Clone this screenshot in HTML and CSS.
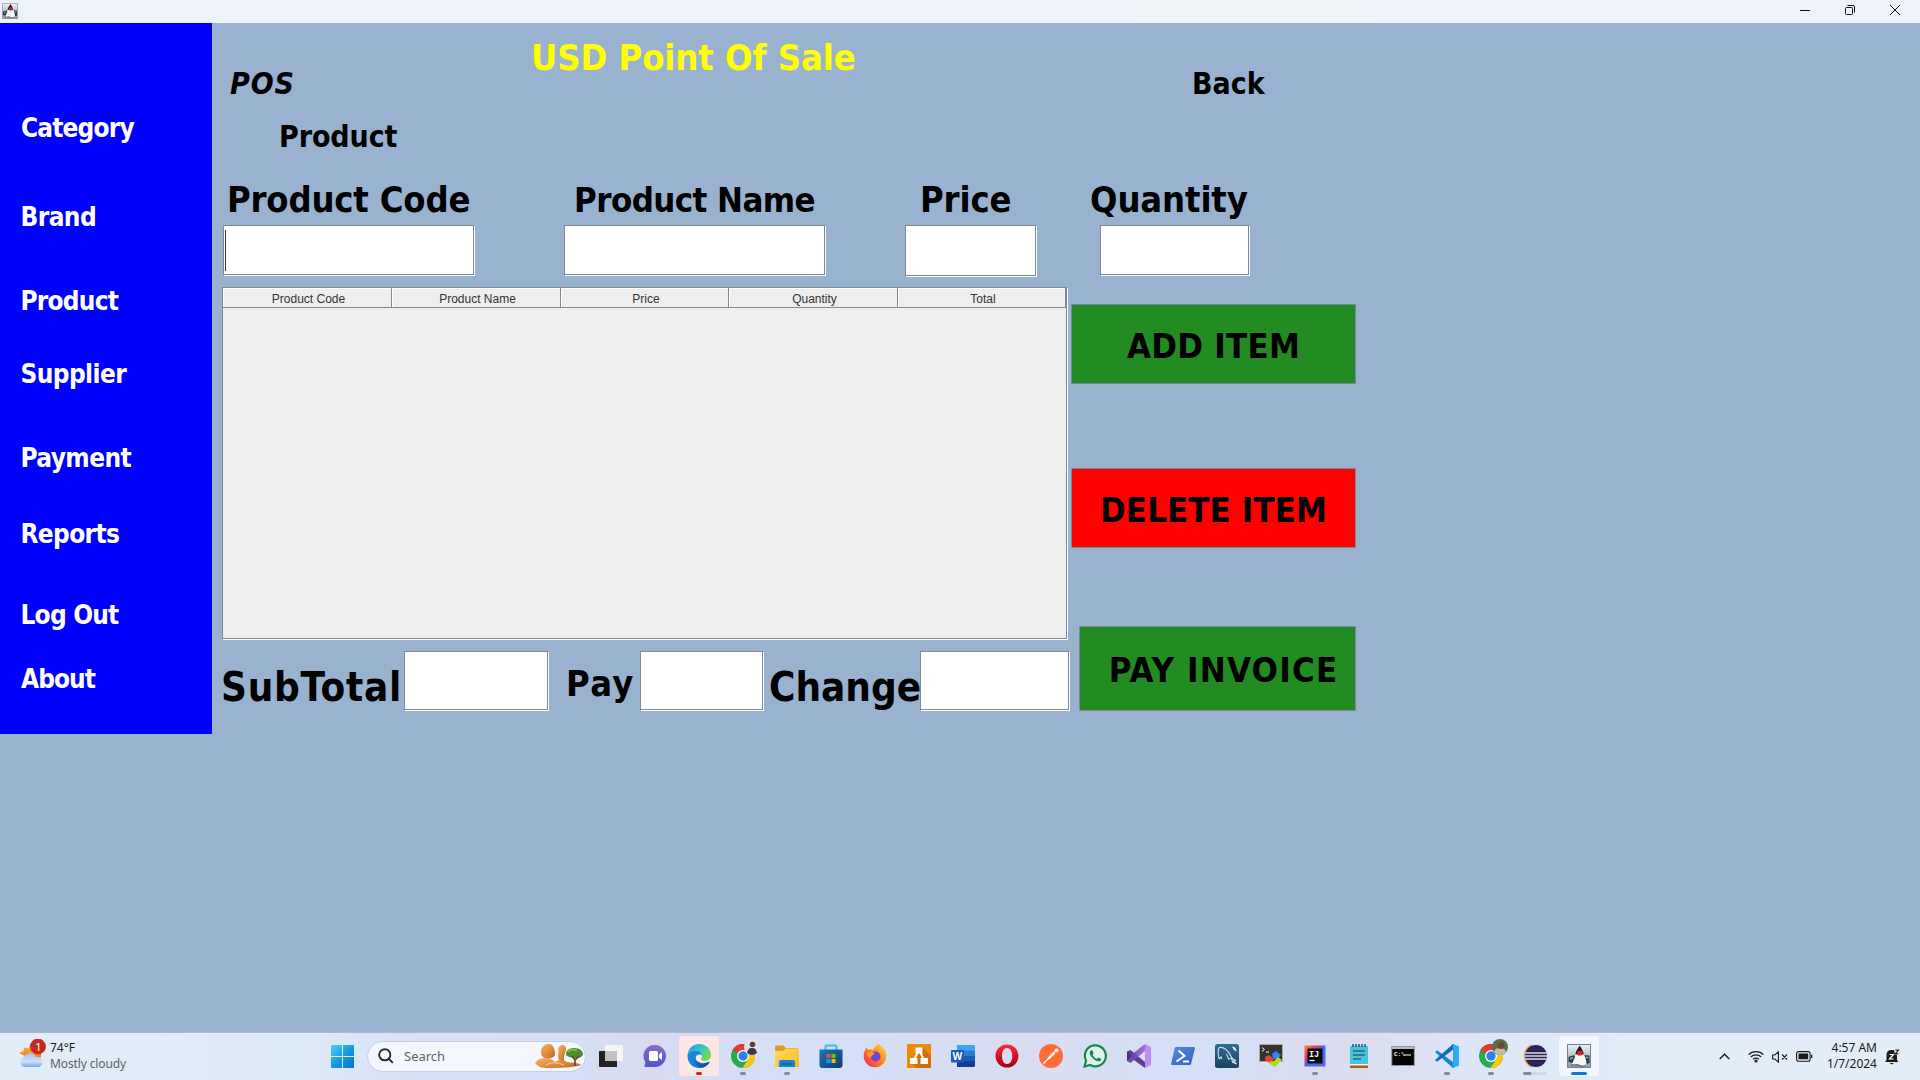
FILE: index.html
```html
<!DOCTYPE html>
<html lang="en">
<head>
<meta charset="utf-8">
<title>USD Point Of Sale</title>
<link rel="stylesheet" href="styles.css">
</head>
<body>
<svg class="defs" width="0" height="0">
  <defs>
    <linearGradient id="win" x1="0" y1="0" x2="1" y2="1"><stop offset="0" stop-color="#4fd3fb"/><stop offset=".5" stop-color="#159ae3"/><stop offset="1" stop-color="#0470cf"/></linearGradient>
    <linearGradient id="sun" x1="0" y1="0" x2="0" y2="1"><stop offset="0" stop-color="#fbc02d"/><stop offset="1" stop-color="#ee7b20"/></linearGradient>
    <linearGradient id="cloud" x1="0" y1="0" x2="0" y2="1"><stop offset="0" stop-color="#9dbff5"/><stop offset=".6" stop-color="#cfe0fb"/><stop offset="1" stop-color="#7ea5ea"/></linearGradient>
    <linearGradient id="rock" x1="0" y1="0" x2="1" y2="1"><stop offset="0" stop-color="#f7b765"/><stop offset="1" stop-color="#c4651c"/></linearGradient>
    <linearGradient id="chat" x1="0" y1="0" x2="0" y2="1"><stop offset="0" stop-color="#8a6ac6"/><stop offset="1" stop-color="#4f58d0"/></linearGradient>
    <linearGradient id="edgeTop" x1="0" y1="0" x2="1" y2=".5"><stop offset="0" stop-color="#1c9fe0"/><stop offset=".5" stop-color="#2cc0d4"/><stop offset="1" stop-color="#6ede4c"/></linearGradient>
    <linearGradient id="edgeLow" x1="0" y1="0" x2="1" y2="1"><stop offset="0" stop-color="#1a8bdc"/><stop offset="1" stop-color="#0b3f8a"/></linearGradient>
    <linearGradient id="folder" x1="0" y1="0" x2="1" y2="1"><stop offset="0" stop-color="#ffdc6a"/><stop offset="1" stop-color="#f8b71c"/></linearGradient>
    <linearGradient id="store" x1="0" y1="0" x2="1" y2="1"><stop offset="0" stop-color="#1878bd"/><stop offset="1" stop-color="#123a70"/></linearGradient>
    <linearGradient id="fox" x1="1" y1="0" x2="0" y2="1"><stop offset="0" stop-color="#ffe03a"/><stop offset=".45" stop-color="#ff8a1d"/><stop offset="1" stop-color="#f0195c"/></linearGradient>
    <linearGradient id="opera" x1="0" y1="0" x2="0" y2="1"><stop offset="0" stop-color="#ff2a3a"/><stop offset="1" stop-color="#a3000f"/></linearGradient>
    <linearGradient id="shell" x1="0" y1="0" x2="1" y2="1"><stop offset="0" stop-color="#5a8ae0"/><stop offset="1" stop-color="#2c5fbd"/></linearGradient>
    <linearGradient id="vs" x1="0" y1="0" x2="1" y2="0"><stop offset="0" stop-color="#5a3794"/><stop offset="1" stop-color="#9a63d8"/></linearGradient>
    <linearGradient id="sql" x1="0" y1="0" x2="0" y2="1"><stop offset="0" stop-color="#2f6d93"/><stop offset="1" stop-color="#1b4361"/></linearGradient>
    <linearGradient id="idea" x1="0" y1="0" x2="1" y2="1"><stop offset="0" stop-color="#fd8a1c"/><stop offset=".3" stop-color="#e8336c"/><stop offset=".55" stop-color="#2f6ff0"/><stop offset="1" stop-color="#6b5cf0"/></linearGradient>
    <linearGradient id="duke" x1="0" y1="0" x2="0" y2="1"><stop offset="0" stop-color="#eef2f5"/><stop offset="1" stop-color="#8199ad"/></linearGradient>
    <symbol id="java" viewBox="0 0 24 24">
      <path d="M.5.5h23v23H.5z" fill="url(#duke)" stroke="#6d8296"/>
      <path d="M1.500 13l5.500-2 2 4-3 4-4.500-1zM22.500 11.500l-5-.5-1 5 3 4 3-1z" fill="#34393e"/>
      <path d="M3 15l3-1.500M18.500 13.500l3 0" stroke="#6eb4e0" stroke-width="1.500"/>
      <path d="M12.500 4C10 7 8.500 10 8 13l-3 7c2 3 5 0 7 1s4 2.500 6.500.5c2-2 .5-6-1-9.500C16.500 9 15 7 12.500 4z" fill="#f6f6f6"/>
      <path d="M12.800 1.500C11 4.500 9 6.500 8.300 10.500l3.700-.5 4.800.5C16.500 7.500 14.500 4.500 12.800 1.500z" fill="#15181b"/>
      <ellipse cx="12.800" cy="9" rx="2.900" ry="2.600" fill="#e31d25"/>
      <path d="M4.500 20.500c2 1.500 5-.5 7 .5s4.500 2 7 0" fill="none" stroke="#3a4045" stroke-width="1"/>
    </symbol>
    <symbol id="chrome" viewBox="0 0 24 24">
      <circle cx="12" cy="12" r="12" fill="#2da94f"/>
      <path d="M12 12L1.600 6A12 12 0 0 1 22.400 6z" fill="#e33b2e"/>
      <path d="M12 6h10.400A12 12 0 0 1 11.500 24L17.200 15z" fill="#fdc60a"/>
      <path d="M1.600 6L6.800 15 12 17.400 12 6z" fill="#2da94f"/>
      <path d="M1.600 6A12 12 0 0 1 22.400 6H12A6 6 0 0 0 6.800 9z" fill="#e33b2e"/>
      <circle cx="12" cy="12" r="6" fill="#fff"/><circle cx="12" cy="12" r="4.700" fill="#3180f0"/>
    </symbol>
  </defs>
</svg>

<header class="titlebar">
  <svg class="app-icon" width="16" height="16"><use href="#java"/></svg>
  <div class="controls">
    <svg width="10" height="10" viewBox="0 0 10 10"><path d="M0 5.500h10" stroke="#111"/></svg>
    <svg width="10" height="10" viewBox="0 0 10 10" fill="none" stroke="#111"><rect x=".5" y="2.500" width="7" height="7" rx="1"/><path d="M2.500.5H8A1.500 1.500 0 0 1 9.500 2v5.500"/></svg>
    <svg width="10" height="10" viewBox="0 0 10 10"><path d="M0 0l10 10M10 0L0 10" stroke="#111"/></svg>
  </div>
</header>

<div class="window">
  <nav class="sidebar">
    <a class="nav n-category">Category</a>
    <a class="nav">Brand</a>
    <a class="nav n-product">Product</a>
    <a class="nav">Supplier</a>
    <a class="nav">Payment</a>
    <a class="nav n-reports">Reports</a>
    <a class="nav n-product">Log Out</a>
    <a class="nav n-about">About</a>
  </nav>

  <main class="main">
    <div class="top">
      <div class="label pos">POS</div>
      <h1 class="title">USD Point Of Sale</h1>
      <div class="label">Back</div>
    </div>
    <h2 class="label section">Product</h2>

    <div class="fields">
      <div class="group"><div class="cap cap-code">Product Code</div><div class="field f-code"><span class="caret"></span></div></div>
      <div class="group"><div class="cap cap-name">Product Name</div><div class="field f-name"></div></div>
      <div class="group"><div class="cap cap-price">Price</div><div class="field f-price"></div></div>
      <div class="group"><div class="cap">Quantity</div><div class="field f-qty"></div></div>
    </div>

    <div class="work">
      <div class="sheet">
        <div class="table">
          <div class="thead">
            <div class="th">Product Code</div><div class="th">Product Name</div><div class="th">Price</div><div class="th">Quantity</div><div class="th">Total</div>
          </div>
        </div>
        <div class="totals">
          <div class="sum s-sub">SubTotal</div><div class="field t-sub"></div>
          <div class="sum s-pay">Pay</div><div class="field t-pay"></div>
          <div class="sum s-change">Change</div><div class="field t-change"></div>
        </div>
      </div>
      <div class="actions">
        <div class="btn add">ADD ITEM</div>
        <div class="btn delete">DELETE ITEM</div>
        <div class="btn pay">PAY INVOICE</div>
      </div>
    </div>
  </main>
</div>

<footer class="taskbar">
  <div class="weather">
    <svg width="30" height="30" viewBox="0 0 30 30">
      <path d="M11 4.500l3 2 8 4v8H9L6 17l-6-3 4.500-2 .5-3.500 5 1z" fill="url(#sun)"/>
      <path d="M5 28a5 5 0 0 1 0-9.500c.8-3 3-4.500 6-4.500s5 1.800 5.800 4.300c4-.8 6.700 1.400 6.700 4.700 0 3-2 5-4.500 5z" fill="url(#cloud)"/>
      <circle cx="19" cy="7.500" r="7.900" fill="#c62a1c"/>
      <text x="19.500" y="11.700" text-anchor="middle" class="badge">1</text>
    </svg>
    <div class="weather-text"><div>74°F</div><div class="muted">Mostly cloudy</div></div>
  </div>
  <svg class="start" width="23" height="23" viewBox="0 0 23 23"><path d="M1 0h10v11H0V1q0-1 1-1zM12 0h10q1 0 1 1v10H12zM0 12h11v11H1q-1 0-1-1zM12 12h11v10q0 1-1 1H12z" fill="url(#win)"/></svg>
  <div class="search">
    <svg width="16" height="16" viewBox="0 0 16 16" fill="none" stroke="#25282c" stroke-width="1.900"><circle cx="6.800" cy="6.800" r="5.600"/><path d="M10.800 10.800l4 4"/></svg>
    <span>Search</span>
    <svg class="scene" width="48" height="26" viewBox="0 0 48 26">
      <path d="M0 20c3-4 6-5 11-5 4 0 7 2 9 4 5-3 9-2 12 0 5 1 10 0 14 3-6 3-38 4-41 2-2-1-4-3-5-4z" fill="url(#rock)"/>
      <path d="M6 9c0-5 3-8 8-8 4 0 6 5 6 10 0 3-4 5-8 4-4 0-6-2-6-6z" fill="url(#rock)"/>
      <path d="M23 5c2-4 8-4 8 1l-2 8v4l-5-1c-2-3 0-7-1-12z" fill="url(#rock)"/>
      <path d="M11 22c6-3 9-3 18 0" stroke="#f9cf8b" fill="none"/>
      <path d="M31 11c0-4 4-6 8-6s9 2 9 6c0 3-5 5-9 4s-8-1-8-4z" fill="#4d8f2c"/><path d="M33 9c2-3 6-3 9-1" stroke="#83bd45" stroke-width="2" fill="none"/>
      <path d="M37 13l3 4 4-4M40 16v7" stroke="#6a3a1d" stroke-width="1.500" fill="none"/>
    </svg>
  </div>
  <div class="apps">
    <div class="app"><svg viewBox="0 0 24 24"><path d="M0 7h18v16H1q-1 0-1-1z" fill="#222"/><path d="M6 1h17q1 0 1 1v14q0 1-1 1H6z" fill="#f5f5f6"/><path d="M6 7h12v10H6z" fill="#c1c2c4"/></svg></div>
    <div class="app"><svg viewBox="0 0 24 24"><path d="M12 1a11 11 0 1 1 0 22H1.500c0-2 .8-3 .8-5A11 11 0 0 1 12 1z" fill="url(#chat)"/><rect x="6" y="7" width="9" height="10" rx="1.500" fill="#fff"/><path d="M16 10.500l3-2.500v8l-3-2.500z" fill="#fff"/></svg></div>
    <div class="app alert"><svg viewBox="0 0 24 24"><path d="M.5 11C1 4.500 6 0 12.200 0 19 0 24 5 24 11c0 3.500-2.500 6-6 6-2 0-4-.6-4-2s1.300-1.500 1-3.500C14.700 8.500 12 6.500 8.500 6.500 5 6.500 2 8 .5 11z" fill="url(#edgeTop)"/><path d="M.5 11C2 8 5 6.500 8.500 6.500c3.500 0 6.200 2 6.500 5-1.500-1.700-6-1.500-6.500 2.500-.6 4.500 4 8 13.500 5A12 12 0 0 1 12 24C5 24 0 18.500.5 11z" fill="#1786d6"/><path d="M8.500 12c-3.500 4-1 10 5.500 11.800 4-.5 7-2.800 8.700-5.600.3-.7-.2-.7-.8-.4C14 21.500 7.500 17 8.500 12z" fill="url(#edgeLow)"/></svg><i class="mark red"></i></div>
    <div class="app"><svg viewBox="0 0 24 24"><use href="#chrome"/></svg><svg class="face" viewBox="0 0 16 16"><circle cx="8" cy="8" r="8" fill="#dfe1e6"/><path d="M3 14c1-4 2-5 5-5s4 1 5 5a8 8 0 0 1-10 0z" fill="#343c55"/><circle cx="8.500" cy="5.500" r="2.800" fill="#5b3a31"/></svg><i class="mark"></i></div>
    <div class="app"><svg viewBox="0 0 24 24"><path d="M0 3q0-1.500 1.500-1.500h7L11 4H23v5H0z" fill="#d9a01c"/><path d="M0 7h8l3-2.500h12q1 0 1 1V22q0 1-1 1H1q-1 0-1-1z" fill="url(#folder)"/><path d="M4 23v-5q0-2 2-2h12q2 0 2 2v5z" fill="#1683cf"/><path d="M7 20h10" stroke="#0b5d9d" stroke-width="1.500"/></svg><i class="mark"></i></div>
    <div class="app"><svg viewBox="0 0 24 24"><path d="M6.500 6V2.500q0-1 1-1h9q1 0 1 1V6" fill="none" stroke="#37bdf0" stroke-width="2"/><path d="M.5 5.500h23V21q0 3-3 3h-17q-3 0-3-3z" fill="url(#store)"/><path d="M7.500 10h4v4h-4z" fill="#f25022"/><path d="M12.500 10h4v4h-4z" fill="#7fba00"/><path d="M7.500 15h4v4h-4z" fill="#00a4ef"/><path d="M12.500 15h4v4h-4z" fill="#ffb900"/></svg></div>
    <div class="app"><svg viewBox="0 0 24 24"><path d="M15 0c4 2 5 4 5 5l1-1c1.500 3 2.300 5 2.300 8A11.300 11.300 0 0 1 .7 12C.7 8 2 6 3.500 3.500L5 6c2-1 3-1 5 0 1-3 3-4 5-6z" fill="url(#fox)"/><circle cx="12.500" cy="12.500" r="5" fill="#7143d8"/><path d="M4 9c3-2 7-1 8 1-3 1-4 2-4 4-3 0-4-3-4-5z" fill="#ff9a26"/></svg></div>
    <div class="app"><svg viewBox="0 0 24 24"><path d="M0 0h24v24H0z" fill="#f08705"/><path d="M15 3l9 9v12H9l-4-5z" fill="#d56e04"/><path d="M12 6L6.500 17M12 6l5.500 11" stroke="#fff" stroke-width="2"/><path d="M8.500 3.500h7v6h-7zM3 14h7.500v6H3zM13.500 14H21v6h-7.500z" fill="#fff"/></svg></div>
    <div class="app"><svg viewBox="0 0 24 24"><path d="M6 1h17q1 0 1 1v5H6z" fill="#41a5ee"/><path d="M6 6.500h18V12H6z" fill="#2b7cd3"/><path d="M6 12h18v5.500H6z" fill="#185abd"/><path d="M6 17h18v5q0 1-1 1H6z" fill="#103f91"/><rect y="6" width="13" height="12.500" rx="1" fill="#1b5bc0"/><text x="6.400" y="16" text-anchor="middle" class="glyph w">W</text></svg></div>
    <div class="app"><svg viewBox="0 0 24 24"><path fill-rule="evenodd" d="M12 .5a11.500 11.500 0 1 1 0 23 11.500 11.500 0 0 1 0-23zm0 3.500c-3.300 0-5 3.500-5 8s1.700 8 5 8 5.300-3.500 5.300-8S15.300 4 12 4z" fill="url(#opera)"/></svg></div>
    <div class="app"><svg viewBox="0 0 24 24"><circle cx="12" cy="12" r="12" fill="#ff6c37"/><path d="M4.500 19.500l4-4M8 16l8-8" stroke="#fff" stroke-width="1.300"/><path d="M8.500 14l5.500-6 2 2-6 5.500z" fill="#fff"/><circle cx="17.500" cy="6.500" r="2" fill="#fff"/></svg></div>
    <div class="app"><svg viewBox="0 0 24 24"><path d="M1.500 22.500l1.600-5.800A10.500 10.500 0 1 1 7.300 21z" fill="#e3f1ee" stroke="#15884f" stroke-width="2.200"/><path d="M8.200 6.300c-2.600 1.500-1.500 5 1.500 8s6.700 4.300 8.300 1.600c.4-.9 0-1.300-2.800-2.400l-1.400 1.400c-1.800-.6-3.600-2.300-4.300-4.100l1.100-1.400c-.8-2.400-1.200-3.300-2.400-3.100z" fill="#15884f"/></svg></div>
    <div class="app"><svg viewBox="0 0 24 24"><path d="M0 7.500L3.500 6 18 18v6L4 14l-4 3z" fill="#5d3d99"/><path d="M0 17l3.500 2L18 7V0L4 11 0 7.500z" fill="url(#vs)" opacity=".9"/><path d="M0 7.500v9.500l4-4.700z" fill="#48307a"/><path d="M18 0l6 3v18l-6 3z" fill="#c08cf4"/></svg></div>
    <div class="app"><svg viewBox="0 0 24 24"><path d="M5 3h18q1 0 1 1l-4 16q-.5 1-1.500 1H1q-1 0-1-1L3.700 4q.3-1 1.300-1z" fill="url(#shell)"/><path d="M7.500 6.500l6 5.500-8 5.500M12 17.500h6" stroke="#fff" stroke-width="2" fill="none"/></svg></div>
    <div class="app"><svg viewBox="0 0 24 24"><rect width="24" height="24" rx="2.500" fill="url(#sql)"/><path d="M4 15C3 10 2.500 5 4.500 3.500c4-1 9 3.500 11 8 1 3 3 4 5 5l-2 .5 3 3-4-2-1-4-3 1-2-5M4 15l2-2 1 2" stroke="#cfe2ee" stroke-width="1.100" fill="none"/><path d="M17 2.500l3 1 2 4-3-1.500z" fill="#fff"/></svg></div>
    <div class="app"><svg viewBox="0 0 24 24"><path d="M.5.500h23v17H.5z" fill="#333" stroke="#b5a995"/><path d="M3 3.500l2.500 2L3 7.500M7 8h3" stroke="#fff" fill="none"/><path d="M6 13l4-2 5 4-3 5-6-4z" fill="#e8423a"/><path d="M13 10l4-3 5 4-4 5-4-2z" fill="#3f7df5"/><path d="M9 19l3-2 2 1 5-5 4 3-7 7z" fill="#b1dc1d"/></svg></div>
    <div class="app"><svg viewBox="0 0 24 24"><path d="M1.500 1.500h21v21h-21z" fill="url(#idea)"/><path d="M4.500 4.500h15v15h-15z" fill="#0d0710"/><path d="M6.500 16.500h5" stroke="#fff" stroke-width="1.300"/><text x="6" y="12.700" class="glyph ij">IJ</text></svg><i class="mark"></i></div>
    <div class="app"><svg viewBox="0 0 24 24"><path d="M3 2h18v20H3z" fill="#4cc3dc"/><path d="M3 21h18v3H3z" fill="#b4581b"/><path d="M3 20h18v1.500H3z" fill="#f3f3f3"/><path d="M6 0v3M9 0v3M12 0v3M15 0v3M18 0v3" stroke="#1f5569" stroke-width="1.500"/><path d="M6 7h12M6 11h12M6 15h8" stroke="#166b8d" stroke-width="1.500"/></svg></div>
    <div class="app"><svg viewBox="0 0 24 24"><path d="M.8 2.500h22.500v19H.8z" fill="#050505" stroke="#93979b"/><path d="M1 3h22v2H1z" fill="#b8bcc1"/><text x="3" y="11.500" class="glyph cmd">C:\</text><path d="M13 11h7" stroke="#fff"/></svg></div>
    <div class="app"><svg viewBox="0 0 24 24"><path d="M0 8l2-1.700 17 12.500V24h-1z" fill="#1487d4"/><path d="M0 16l2 1.700L19 5V0h-1z" fill="#0b6fbd"/><path d="M18 0l6 2.500v19L18 24z" fill="#2ea9f2"/></svg><i class="mark"></i></div>
    <div class="app"><svg viewBox="0 0 24 24"><use href="#chrome"/></svg><svg class="face" viewBox="0 0 16 16"><circle cx="8" cy="8" r="8" fill="#5c6f47"/><path d="M2 13.300c1-4 3-4 6-4s5 0 6 4a8 8 0 0 1-12 0z" fill="#bdbab0"/><circle cx="9" cy="6.500" r="3.500" fill="#6b4a38"/></svg><i class="mark"></i></div>
    <div class="app"><svg viewBox="0 0 24 24"><path d="M9 1.300A11.500 11.500 0 0 0 9 22.700 11.500 11.500 0 0 1 9 1.300z" fill="#f7941e" stroke="#f7941e" stroke-width="1.500"/><circle cx="13" cy="12" r="11" fill="#2c2255"/><path d="M2 9h22M2 12h22M2 15h22" stroke="#d9d8ea" stroke-width="1.500"/></svg><i class="mark wide"></i></div>
    <div class="app current"><svg viewBox="0 0 24 24"><use href="#java"/></svg><i class="mark blue"></i></div>
  </div>
  <div class="tray">
    <svg width="11" height="7" viewBox="0 0 11 7"><path d="M.7 6l4.800-4.800L10.300 6" fill="none" stroke="#1b1b1b" stroke-width="1.400"/></svg>
    <svg class="wifi" width="16" height="13" viewBox="0 0 16 13" fill="none" stroke="#1b1b1b" stroke-width="1.200"><path d="M.6 4.600a10.500 10.500 0 0 1 14.800 0M2.800 7a7.300 7.300 0 0 1 10.400 0M5 9.300a4.200 4.200 0 0 1 6 0"/><circle cx="8" cy="11" r="1" fill="#1b1b1b"/></svg>
    <svg class="speaker" width="16" height="12" viewBox="0 0 16 12" fill="none" stroke="#1b1b1b" stroke-width="1.100"><path d="M.6 4h2.200L6.400.8v10.400L2.800 8H.6zM10 3.500l5 5M15 3.500l-5 5"/></svg>
    <svg class="battery" width="17" height="11" viewBox="0 0 17 11"><rect x=".6" y=".6" width="13.500" height="9.600" rx="2" fill="none" stroke="#1b1b1b" stroke-width="1.100"/><path d="M2.500 2.500h9.700v5.800H2.500zM15 3.800h1.300v3.200H15z" fill="#1b1b1b"/></svg>
    <div class="clock"><div class="time">4:57 AM</div><div>1/7/2024</div></div>
    <svg class="bell" width="15" height="16" viewBox="0 0 15 16"><path d="M1.500 11V6q0-5 5-5h5.500v10l1.500 2H0z" fill="#1b1b1b"/><path d="M4.500 14h4.500l-2.200 1.500z" fill="#1b1b1b"/><path d="M4.500 5.500h4l-4 4.500h4" fill="none" stroke="#fff" stroke-width="1.200"/><path d="M8.800 0h5.700v5.500H10z" fill="#e2edf8"/><path d="M10.300 1h3.200l-3.200 3.700h3.200" fill="none" stroke="#1b1b1b" stroke-width="1.100"/></svg>
  </div>
</footer>
</body>
</html>
```
FILE: styles.css
```css
* { box-sizing: border-box; }
body {
  margin: 0;
  width: 1920px;
  height: 1080px;
  overflow: hidden;
  display: flex;
  flex-direction: column;
  background: #99b2d0;
  color: #000;
  font-family: "DejaVu Sans Condensed", "DejaVu Sans", sans-serif;
}
svg { display: block; flex: none; }
.defs { position: absolute; }

/* title bar */
.titlebar {
  height: 23px;
  flex: none;
  display: flex;
  justify-content: space-between;
  padding: 3px 20px 0 2px;
  background: linear-gradient(90deg, #eef3fb 1100px, #eff4f7 1180px, #eff4f7 1340px, #eef3fb 1400px);
}
.controls { display: flex; gap: 35px; padding-top: 2px; }

/* window */
.window { flex: 1; display: flex; align-items: flex-start; min-height: 0; }
.sidebar {
  width: 212px;
  height: 711px;
  flex: none;
  padding: 90px 0 0 20px;
  background: #00f;
  display: grid;
  grid-template-rows: 89px 84px 73px 84px 76px 81px 64px 30px;
}
.nav { color: #fff; font-weight: bold; font-size: 26px; line-height: 30px; letter-spacing: -.6px; padding-left: .5px; }
.n-category { letter-spacing: -.85px; padding-left: 1px; }
.n-product { letter-spacing: -.8px; }
.n-reports { letter-spacing: -.65px; }
.n-about { letter-spacing: -.95px; padding-left: 1px; }

.main { flex: 1; }
.top { height: 94px; display: grid; grid-template-columns: 301px 661px 200px; padding: 41px 0 0 18px; }
.label { margin: 0; font-size: 30px; font-weight: bold; line-height: 40px; }
.pos { font-style: italic; letter-spacing: .9px; }
.title { margin: -28px 0 0; font-size: 36px; line-height: 44px; color: #ff0; letter-spacing: -.07px; }
.section { padding-left: 67px; letter-spacing: -.1px; }

.fields { display: grid; grid-template-columns: 341px 341px 185px 160px; padding: 21px 0 0 11px; height: 130px; }
.cap { font-size: 36px; font-weight: bold; line-height: 44px; margin-bottom: 3px; letter-spacing: -.12px; }
.cap-code { padding-left: 4px; letter-spacing: -.18px; }
.cap-name { padding-left: 10px; font-size: 34.5px; letter-spacing: -.58px; }
.cap-price { padding-left: 15px; }
.field { background: #fff; border: 1px solid #7a8a99; box-shadow: 1px 1px 0 #fff; }
.f-code { width: 251px; height: 50px; padding: 4px 0 0 1px; }
.caret { display: block; width: 1px; height: 41px; background: #333; }
.f-name { width: 261px; height: 50px; }
.f-price { width: 131px; height: 51px; }
.f-qty { width: 149px; height: 50px; margin-left: 10px; }

.work { display: flex; padding-left: 8px; }
.sheet { width: 851px; }
.table { margin-left: 2px; width: 845px; height: 352px; background: #eee; border: 1px solid #7a8a99; box-shadow: 1px 1px 0 #fff; }
.thead { display: grid; grid-template-columns: 169px 169px 168px 169px 168px; height: 20px; }
.th {
  font: 12px/16px "Liberation Sans", Arial, sans-serif;
  height: 20px;
  text-align: center;
  color: #333;
  padding: 3px 0 0 3px;
  border: solid #7a8a99;
  border-width: 0 1px 1px 0;
  box-shadow: inset 1px 1px 0 #fff;
}
.totals { display: flex; margin-top: 12px; }
.totals .field { height: 59px; }
.sum { font-weight: bold; font-size: 40px; line-height: 60px; white-space: nowrap; margin-bottom: -10px; }
.s-sub { width: 184px; padding: 6px 0 0 1px; letter-spacing: .75px; }
.s-pay { width: 74px; margin-left: 18px; padding-top: 3px; font-size: 36px; letter-spacing: 1.4px; }
.s-change { width: 157px; padding: 6px 0 0 6px; letter-spacing: 0; }
.t-sub { width: 144px; }
.t-pay { width: 123px; }
.t-change { width: 149px; }

.actions { width: 285px; display: flex; flex-direction: column; align-items: flex-end; padding-top: 17px; }
.btn {
  display: flex;
  align-items: center;
  justify-content: center;
  width: 285px;
  height: 80px;
  padding-top: 3px;
  border: 1px solid #7a8a99;
  font-size: 34.5px;
  font-weight: bold;
  letter-spacing: .25px;
  background: #228b22;
}
.delete { background: #f00; margin-top: 84px; letter-spacing: .1px; }
.pay { width: 277px; height: 85px; margin-top: 78px; padding-left: 12px; letter-spacing: 1.2px; }

/* taskbar */
.taskbar {
  height: 48px;
  flex: none;
  display: flex;
  align-items: center;
  border-top: 1px solid #b0b6c2;
  background: linear-gradient(90deg, #e2edf8 0, #deebf8 300px, #d6e0f6 420px, #d5e0f6 560px, #d8daf0 650px, #d4e0f7 800px, #d8dcf1 1000px, #d5e0f6 1200px, #dadcf0 1350px, #dde7f6 1500px, #e2edf8 1650px);
  font: 12px/16px "Noto Sans", sans-serif;
  color: #1b1b1b;
}
.weather { display: flex; width: 331px; padding-left: 19px; }
.weather svg { margin-top: -2px; }
.weather-text { padding-left: 1px; margin-top: -.5px; }
.muted { color: #5c6269; letter-spacing: -.12px; }
.badge { font: 11px "Noto Sans", sans-serif; fill: #fff; }
.search {
  display: flex;
  align-items: center;
  width: 219px;
  height: 31px;
  margin: -1px 3px 0 13px;
  padding: 0 2px 0 10px;
  border: 1px solid #c3cee6;
  border-radius: 16px;
  background: #f4f7fd;
  font-size: 13px;
  color: #5f6369;
}
.search span { flex: 1; padding-left: 10px; }
.apps { display: flex; margin-top: -1px; }
.app { position: relative; width: 40px; height: 40px; margin: 0 2px; padding: 8px; border-radius: 4px; }
.app svg { width: 24px; height: 24px; }
.app .face { position: absolute; left: 21px; top: 3px; width: 16px; height: 16px; }
.alert { background: #fde6e8; }
.current { background: #f3f7fd; }
.mark { position: absolute; left: 17px; bottom: 1px; width: 6px; height: 3px; border-radius: 2px; background: #848a94; }
.red { background: #c62a1c; }
.blue { left: 12px; width: 16px; background: #0a78d4; }
.wide { left: 8px; width: 24px; background: linear-gradient(90deg, #848a94 8px, #cfd7e2 8px); }
.glyph { fill: #fff; font-weight: bold; }
.w { font-size: 10px; font-family: "Noto Sans", sans-serif; }
.ij { font-size: 8.500px; font-family: "Liberation Mono", monospace; }
.cmd { font-size: 6px; font-family: "Liberation Mono", monospace; }
.tray { flex: 1; display: flex; align-items: center; justify-content: flex-end; padding-right: 20px; }
.wifi { margin-left: 18px; }
.speaker { margin-left: 8px; }
.battery { margin-left: 8px; }
.clock { width: 64px; text-align: right; margin-top: -1px; }
.bell { margin-left: 8px; }
```
